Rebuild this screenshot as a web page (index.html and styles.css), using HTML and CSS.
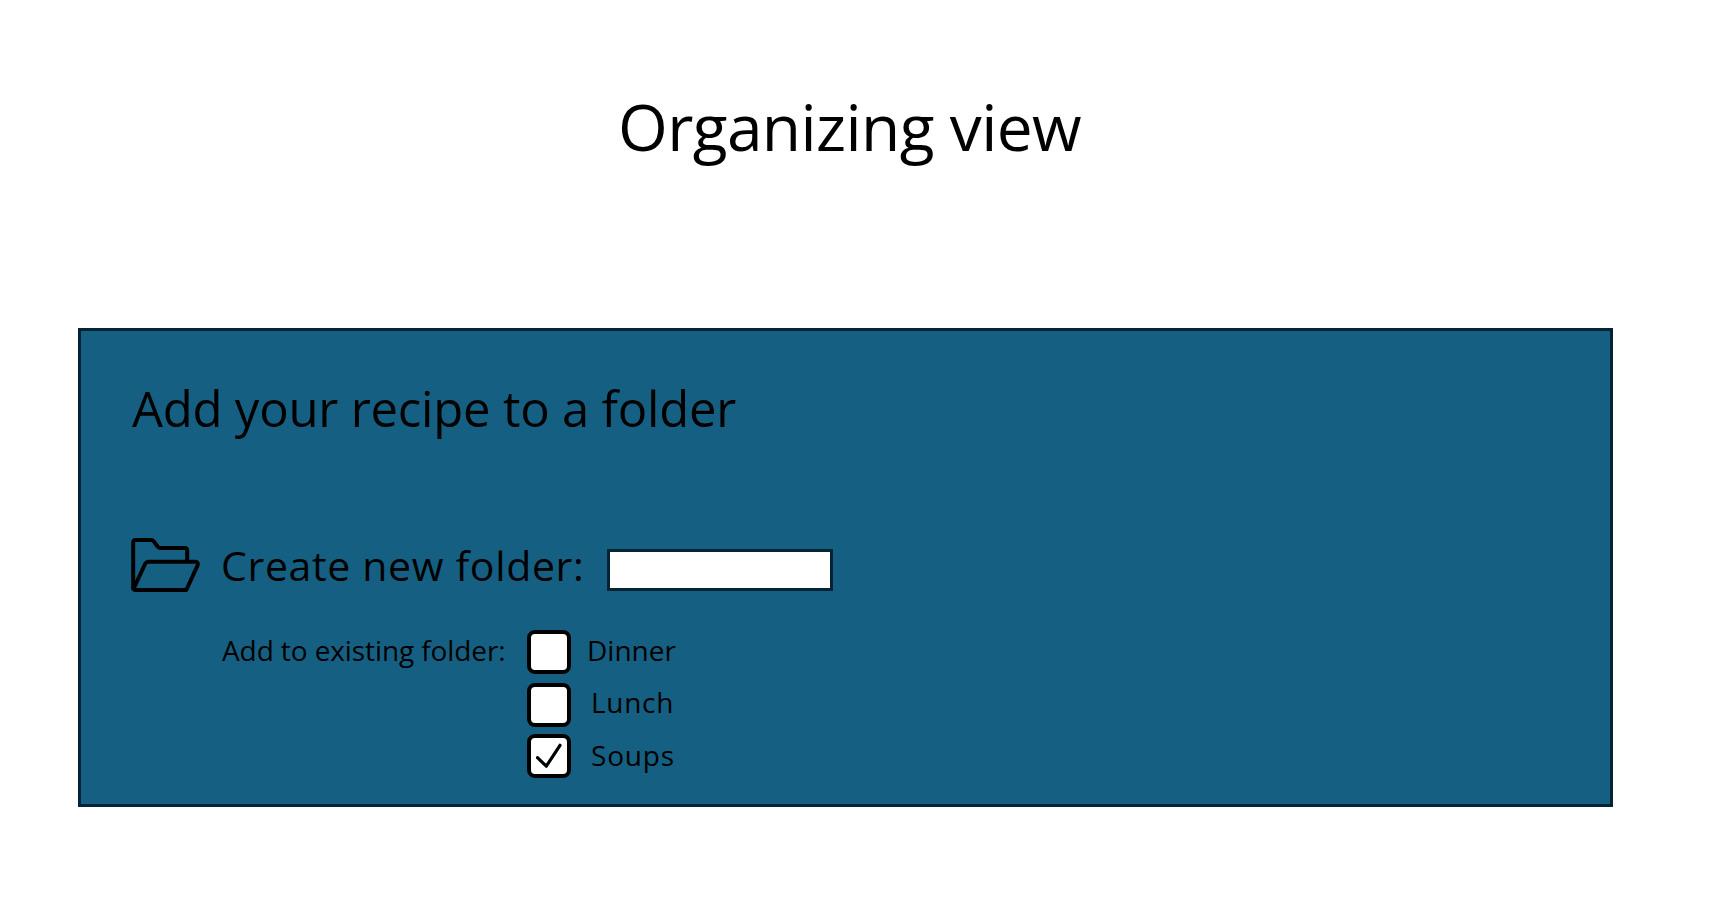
FILE: index.html
```html
<!DOCTYPE html>
<html lang="en">
<head>
<meta charset="utf-8">
<title>Organizing view</title>
<link rel="stylesheet" href="styles.css">
</head>
<body>
<h1 class="title">Organizing view</h1>
<main class="panel">
  <h2 class="heading">Add your recipe to a folder</h2>
  <div class="create">
    <svg class="folder" width="70" height="56" viewBox="0 0 70 56" fill="none" stroke="#000" stroke-width="4" stroke-linejoin="round" stroke-linecap="round">
      <path d="M56.2 22V12.5Q56.2 10 53.7 10H29Q27.5 10 26.5 8.5L23 3.6Q21.8 2 20 2H4.5Q2.2 2 2.2 4.5V50"/>
      <path d="M2.5 51L14.3 25.5Q15.5 23.7 17.5 23.7H64Q67.8 23.9 66.5 27.5L55.3 52H4.5Q2.5 52 2.2 50"/>
    </svg>
    <label class="create-label" for="name">Create new folder:</label>
    <input class="name" id="name" type="text">
  </div>
  <div class="existing">
    <span class="existing-label">Add to existing folder:</span>
    <div class="options">
      <label class="option"><span class="box"></span><span class="dinner">Dinner</span></label>
      <label class="option"><span class="box"></span><span class="lunch">Lunch</span></label>
      <label class="option"><span class="box"><svg width="26" height="26" viewBox="0 0 26 26" fill="none" stroke="#000" stroke-width="3.2" stroke-linecap="round" stroke-linejoin="round"><path d="M1.5 14.7L10.3 23.2L24 2.3"/></svg></span><span class="soups">Soups</span></label>
    </div>
  </div>
</main>
</body>
</html>
```
FILE: styles.css
```css
* { box-sizing: border-box; }
body {
  margin: 0;
  padding: 87px 122px 0 78px;
  height: 897px;
  background: #fff;
  color: #000;
  font-family: "Open Sans", "Liberation Sans", sans-serif;
}
.title {
  margin: 0 0 161px;
  padding-left: 540px;
  font-size: 64px;
  line-height: 80px;
  font-weight: 400;
  letter-spacing: -0.6px;
  white-space: nowrap;
}
.panel {
  height: 479px;
  padding: 47px 50px 0;
  background: #156082;
  border: 3px solid #042433;
}
.heading {
  margin: 0 0 100px 1px;
  font-size: 49px;
  line-height: 60px;
  font-weight: 400;
  letter-spacing: -0.2px;
  white-space: nowrap;
}
.create { display: flex; height: 92px; align-items: flex-start; }
.folder { flex: none; }
.create-label {
  width: 384px;
  margin: 2px 0 0 20px;
  font-size: 41px;
  line-height: 50px;
  letter-spacing: 0.65px;
  white-space: nowrap;
}
.name {
  width: 226px;
  height: 42px;
  margin: 11px 0 0 2px;
  padding: 0 8px;
  border: 3px solid #042433;
  border-radius: 0;
  background: #fff;
  font: 24px "Open Sans", sans-serif;
}
.existing {
  display: flex;
  padding-left: 91px;
  font-size: 28px;
  line-height: 40px;
  white-space: nowrap;
}
.existing-label { width: 305px; letter-spacing: -0.1px; }
.options { display: grid; grid-template-rows: 53px 51px 44px; }
.option { display: flex; }
.box {
  display: grid;
  place-items: center;
  flex: none;
  width: 44px;
  height: 44px;
  border: 4px solid #000;
  border-radius: 8px;
  background: #fff;
}
.dinner { margin-left: 16px; }
.lunch { margin: -1px 0 0 20px; letter-spacing: 0.7px; }
.soups { margin: 1px 0 0 20px; letter-spacing: 0.8px; }
```
